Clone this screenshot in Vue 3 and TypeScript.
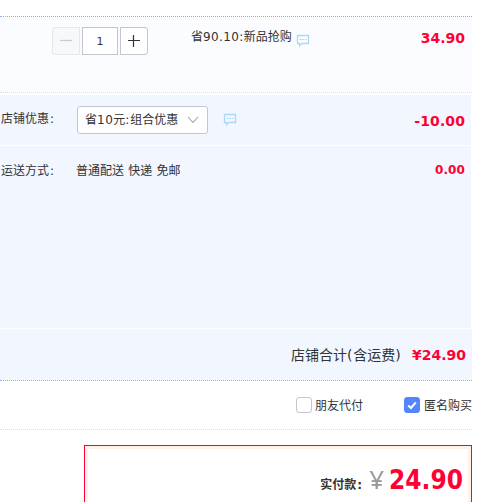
<script setup lang="ts">
import { ref } from 'vue'

const quantity = ref(1)
const friendPay = ref(false)
const anonymous = ref(true)
const price = '34.90'
const discount = '-10.00'
const shipping = '0.00'
const total = '24.90'
</script>

<template>
  <main class="order">
    <section class="item">
      <div class="stepper">
        <button class="step minus" disabled aria-label="减少">
          <svg width="14" height="14" viewBox="0 0 14 14"><path d="M1 6.5H13" /></svg>
        </button>
        <span class="count">{{ quantity }}</span>
        <button class="step plus" aria-label="增加" @click="quantity++">
          <svg width="14" height="14" viewBox="0 0 14 14"><path d="M1 6.5H13M6.5 1V13" /></svg>
        </button>
      </div>
      <span class="promo">省<span class="num">90.10:</span>新品抢购</span>
      <svg class="bubble promo-bubble" width="14" height="13" viewBox="0 0 14 13">
        <path d="M1.5 1.5H12.5V9.5H6L3.5 11.7V9.5H1.5Z" /><path class="dots" d="M3.5 5.5H10.5" />
      </svg>
      <strong class="amount item-amount">{{ price }}</strong>
    </section>

    <section class="row offer">
      <span class="label">店铺优惠<span class="colon">:</span></span>
      <button class="select">
        <span>省<span class="opt">10</span>元<span class="opt-colon">:</span>组合优惠</span>
        <svg width="12" height="8" viewBox="0 0 12 8"><path d="M1 1L6 6.5L11 1" /></svg>
      </button>
      <svg class="bubble offer-bubble" width="14" height="13" viewBox="0 0 14 13">
        <path d="M1.5 1.5H12.5V9.5H6L3.5 11.7V9.5H1.5Z" /><path class="dots" d="M3.5 5.5H10.5" />
      </svg>
      <strong class="amount offer-amount">{{ discount }}</strong>
    </section>

    <section class="row delivery">
      <span class="label">运送方式<span class="colon">:</span></span>
      <span class="method">普通配送 快递 免邮</span>
      <strong class="amount small">{{ shipping }}</strong>
    </section>

    <section class="subtotal">
      <span class="subtotal-label">店铺合计<span class="paren">(</span>含运费<span class="paren">)</span></span>
      <strong class="amount">¥{{ total }}</strong>
    </section>

    <section class="options">
      <label class="check friend" @click="friendPay = !friendPay">
        <span class="box" :class="{ on: friendPay }"></span><span class="check-text">朋友代付</span>
      </label>
      <label class="check" @click="anonymous = !anonymous">
        <span class="box" :class="{ on: anonymous }">
          <svg v-if="anonymous" width="10" height="9" viewBox="0 0 10 9"><path d="M1.2 4.5L4 7L8.8 1.3" /></svg>
        </span><span class="check-text">匿名购买</span>
      </label>
    </section>

    <section class="payment">
      <span class="pay-label">实付款<span class="pay-colon">:</span></span>
      <span class="yen">¥</span>
      <strong class="pay-total">{{ total }}</strong>
    </section>
  </main>
</template>

<style>
body { background: #fff; overflow: hidden; }
</style>

<style scoped>
.order {
  box-sizing: border-box;
  width: 472px;
  height: 502px;
  padding-top: 16px;
  overflow: hidden;
  color: #333;
  font: 12px/18px "DejaVu Sans", "Noto Sans CJK SC", sans-serif;
}
.order * { box-sizing: border-box; }
button { padding: 0; font: inherit; color: inherit; }
svg { display: block; fill: none; flex: none; }
.item {
  display: flex;
  align-items: flex-start;
  height: 77px;
  padding: 10px 7px 0 52px;
  background: #fbfcff;
  background-clip: padding-box;
  border-top: 1px dotted #80b2ff;
  border-bottom: 1px dotted #ddd;
}
.stepper { display: flex; gap: 2px; width: 96px; height: 28px; }
.step {
  display: flex;
  align-items: center;
  justify-content: center;
  width: 28px;
  height: 28px;
  border: 1px solid #c4c6cf;
  background: #fff;
}
.minus { border-color: #e6e7eb; border-radius: 3px 0 0 3px; background: #f7f8fa; }
.plus { border-radius: 0 3px 3px 0; }
.minus path { stroke: #ccc; stroke-width: 1.3; }
.plus path { stroke: #333; stroke-width: 1.2; }
.count {
  width: 36px;
  height: 28px;
  border: 1px solid #c4c6cf;
  background: #fff;
  font-size: 11px;
  line-height: 28px;
  text-align: center;
}
.promo { margin: 1px 0 0 43px; white-space: nowrap; }
.num { letter-spacing: .4px; }
.bubble path { stroke: #add8f5; stroke-width: 1.3; }
.bubble .dots { stroke-dasharray: 2 .8; stroke-width: 1; }
.promo-bubble { margin: 7px 0 0 4px; }
.amount { margin-left: auto; color: #f03; font-size: 14px; line-height: 20px; }
.item-amount { margin-top: 1px; }
.row { display: flex; align-items: flex-start; width: 471px; padding-right: 6px; background: #f1f6ff; }
.offer { height: 50px; margin-top: 2px; padding-top: 11px; }
.label { width: 77px; padding-left: 1px; margin-top: 4px; }
.colon { margin-left: 1px; }
.select {
  display: flex;
  align-items: center;
  justify-content: space-between;
  width: 131px;
  height: 28px;
  padding: 0 8px 0 7px;
  border: 1px solid #c4c6cf;
  border-radius: 3px;
  background: #fff;
}
.opt { letter-spacing: .5px; }
.opt-colon { letter-spacing: 1px; }
.select path { stroke: #a0a2a8; stroke-width: 1.1; }
.offer-bubble { margin: 7px 0 0 15px; }
.offer-amount { margin-top: 5px; letter-spacing: .1px; }
.delivery { height: 182px; margin-top: 1px; padding-top: 12px; }
.small { margin-top: 2px; font-size: 12px; letter-spacing: .1px; }
.method { margin: 4px 0 0 -1px; word-spacing: .4px; }
.subtotal {
  display: flex;
  align-items: center;
  height: 52px;
  margin-top: 1px;
  padding-right: 6px;
  background: #f1f6ff;
  background-clip: padding-box;
  border-bottom: 1px dotted #80b2ff;
}
.subtotal-label { margin-left: 291px; font-size: 14px; white-space: nowrap; }
.paren { letter-spacing: .8px; }
.options {
  display: flex;
  align-items: center;
  height: 49px;
  padding-left: 296px;
  border-bottom: 1px dotted #ddd;
}
.check { display: flex; align-items: center; gap: 3px; white-space: nowrap; }
.check + .check { gap: 4px; }
.check-text { padding-top: 2px; }
.friend { width: 108px; }
.box {
  display: flex;
  align-items: center;
  justify-content: center;
  width: 16px;
  height: 16px;
  border: 1px solid #c4c6cf;
  border-radius: 3px;
  background: #fff;
}
.box.on { border-color: #5584ff; background: #5584ff; }
.box path { stroke: #fff; stroke-width: 2; }
.payment {
  display: flex;
  align-items: baseline;
  justify-content: flex-end;
  width: 388px;
  height: 100px;
  margin: 15px 0 0 84px;
  padding: 15px 8px 0 0;
  border: 1px solid #f03;
  box-shadow: inset 0 0 0 3px #fff0e8;
}
.pay-label { color: #333; font-weight: bold; }
.pay-colon { margin-left: 1px; }
.yen { margin-left: 7px; color: #999; font: 26px/37px "Noto Sans", sans-serif; }
.pay-total { margin-left: 5px; color: #f03; font: bold 26px/38px "DejaVu Sans Condensed", "Open Sans", sans-serif; }
</style>
